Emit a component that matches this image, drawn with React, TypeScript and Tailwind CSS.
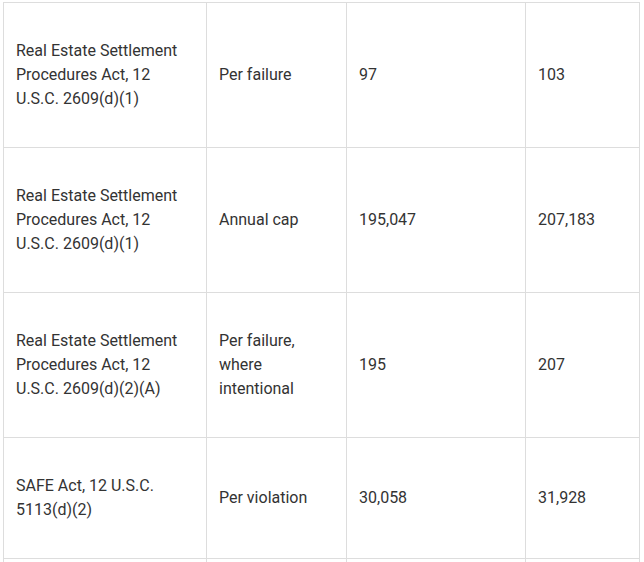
import React from 'react';

const rows = [
  { law: 'Real Estate Settlement Procedures Act, 12 U.S.C. 2609(d)(1)', kind: 'Per failure', before: '97', after: '103' },
  { law: 'Real Estate Settlement Procedures Act, 12 U.S.C. 2609(d)(1)', kind: 'Annual cap', before: '195,047', after: '207,183' },
  { law: 'Real Estate Settlement Procedures Act, 12 U.S.C. 2609(d)(2)(A)', kind: 'Per failure, where intentional', before: '195', after: '207' },
  { law: 'SAFE Act, 12 U.S.C. 5113(d)(2)', kind: 'Per violation', before: '30,058', after: '31,928' },
  { law: '\u00a0', kind: '\u00a0', before: '\u00a0', after: '\u00a0' },
];

export default function App() {
  return (
    <div className="bg-white h-[562px] overflow-hidden pl-[3px] pt-[2px] font-['Roboto',sans-serif] text-[16px] leading-[24px] text-[#333333]">
      <div className="grid grid-cols-[203px_140px_179px_114px] w-[637px] border-l border-t border-[#dddddd]">
        {rows.map((r, i) => (
          <React.Fragment key={i}>
            {[r.law, r.kind, r.before, r.after].map((c, j) => (
              <div
                key={j}
                className="flex items-center px-3 py-9 border-r border-b border-[#dddddd] box-border"
              >
                <span>{c}</span>
              </div>
            ))}
          </React.Fragment>
        ))}
      </div>
    </div>
  );
}
